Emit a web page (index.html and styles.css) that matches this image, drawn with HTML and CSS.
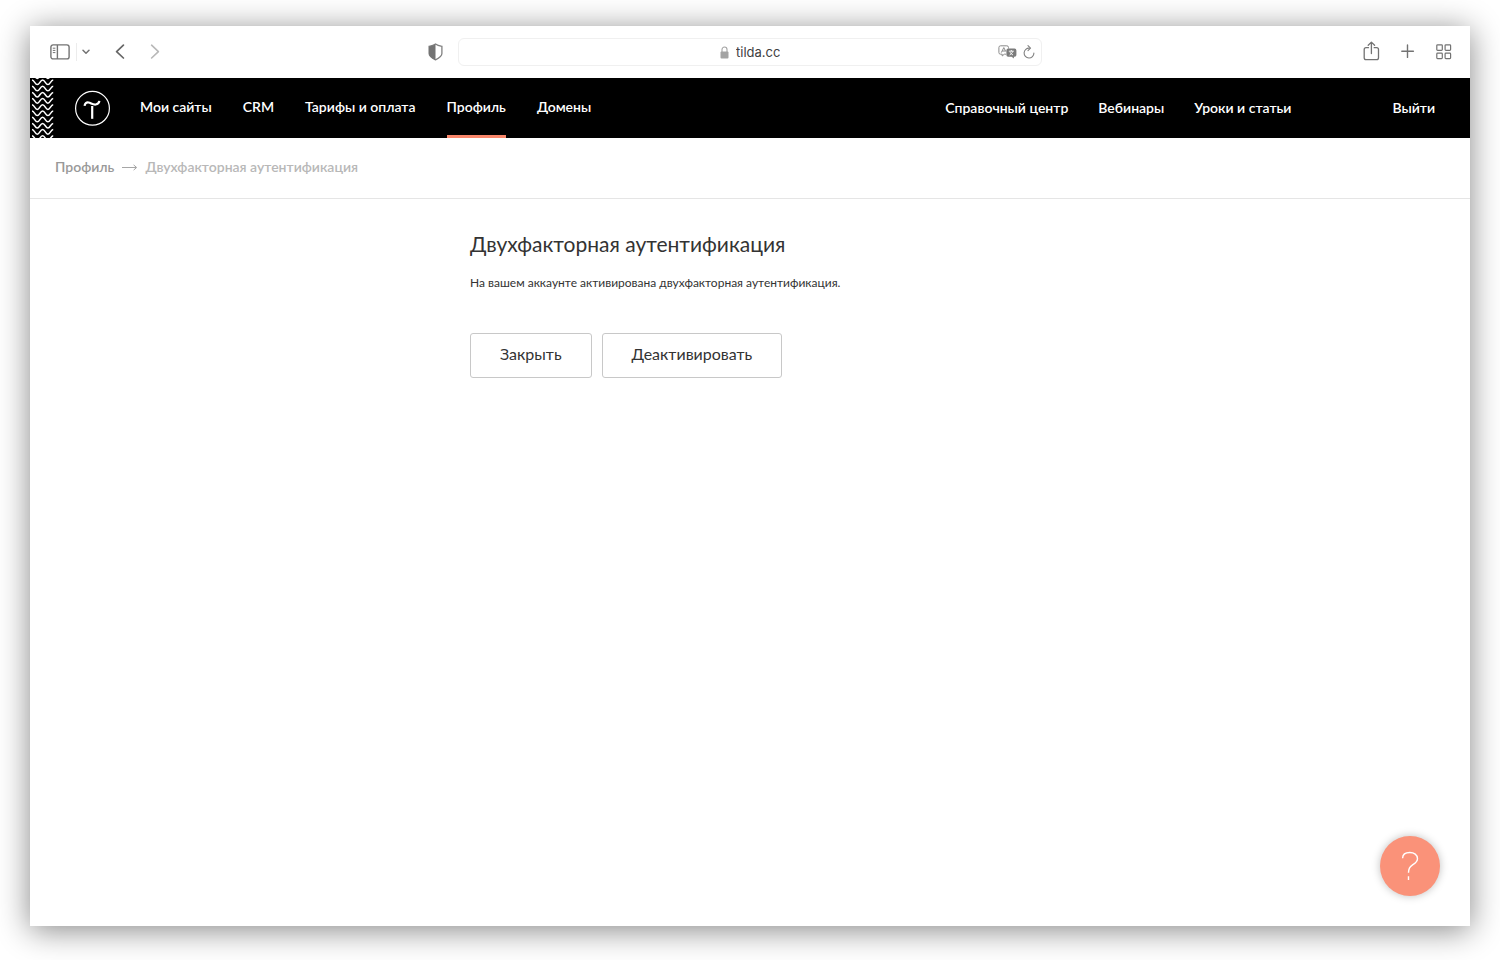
FILE: index.html
```html
<!DOCTYPE html>
<html lang="ru">
<head>
<meta charset="utf-8">
<meta name="viewport" content="width=device-width, initial-scale=1">
<title>Двухфакторная аутентификация</title>
<link rel="stylesheet" href="styles.css">
</head>
<body>
<div class="window">
  <div class="toolbar">
    <div class="toolbar-side toolbar-start">
      <button class="icon-btn" aria-label="Боковая панель"><svg width="20" height="16" viewBox="0 0 20 16" fill="none" stroke="#737373" stroke-width="1.4"><rect x=".9" y=".9" width="18.2" height="14" rx="2.2"/><path d="M7.4 1v14"/><path d="M2.8 4.2h2.6M2.8 6.4h2.6M2.8 8.6h2.6" stroke-width="1"/></svg></button>
      <button class="icon-btn chevron" aria-label="Группы вкладок"><svg width="8" height="6" viewBox="0 0 8 6" fill="none" stroke="#737373" stroke-width="1.5" stroke-linecap="round" stroke-linejoin="round"><path d="M1 1.2l3 3 3-3"/></svg></button>
      <button class="icon-btn back" aria-label="Назад"><svg width="10" height="16" viewBox="0 0 10 16" fill="none" stroke="#666" stroke-width="1.7" stroke-linecap="round" stroke-linejoin="round"><path d="M8.4 1.2L1.6 7.6l6.8 6.4"/></svg></button>
      <button class="icon-btn forward" aria-label="Вперёд"><svg width="10" height="16" viewBox="0 0 10 16" fill="none" stroke="#b8b8b8" stroke-width="1.6" stroke-linecap="round" stroke-linejoin="round"><path d="M1.6 1.2l6.8 6.4L1.6 14"/></svg></button>
      <button class="icon-btn shield" aria-label="Отчёт о конфиденциальности"><svg width="15" height="18" viewBox="0 0 15 18"><path d="M7.5 1.1C5.8 2.4 3.6 3 1.1 3.4v7.2c0 3 3.2 4.8 6.4 6.3 3.2-1.5 6.4-3.3 6.4-6.3V3.4C11.4 3 9.2 2.4 7.5 1.1z" fill="none" stroke="#808080" stroke-width="1.3"/><path d="M7.5 1v16C4.3 15.5 1 13.6 1 10.6V3.4C3.6 3 5.8 2.4 7.5 1z" fill="#737373"/></svg></button>
    </div>
    <div class="address">
      <label class="address-center" for="url">
        <svg width="9" height="13" viewBox="0 0 9 13"><rect x=".5" y="5.5" width="8" height="7" rx="1" fill="#a3a3a3"/><path d="M2 6V3.6a2.5 2.6 0 0 1 5 0V6" fill="none" stroke="#a3a3a3" stroke-width="1.1"/></svg>
        <input class="url" id="url" type="text" value="tilda.cc" size="6" aria-label="Адрес">
      </label>
      <div class="address-tools">
        <button class="icon-btn" aria-label="Перевести"><svg width="19" height="15" viewBox="0 0 19 15"><path d="M8 9.2H6.3L4.2 11V9.2H2.6A1.7 1.7 0 0 1 .9 7.5v-5A1.7 1.7 0 0 1 2.6.8h6.200a1.700 1.700 0 0 1 1.700 1.700v1" fill="none" stroke="#8a8a8a"/><path d="M3.300 7.600l2.500-5 2 4M4.200 6h3" fill="none" stroke="#8a8a8a"/><path d="M10.200 3.600h6.400a1.800 1.800 0 0 1 1.800 1.800v4.500a1.800 1.800 0 0 1-1.800 1.800h-.7v1.900l-2.300-1.900h-3.400a1.800 1.800 0 0 1-1.800-1.800V5.400a1.800 1.800 0 0 1 1.800-1.800z" fill="#7b7b7b"/><path d="M10.800 6.200h5M13.300 5v1.200M11.600 10c1.800-1 2.700-2.200 3.100-3.600M12 7.200c.7 1.300 1.700 2.200 3 2.800" fill="none" stroke="#fff" stroke-width=".9"/></svg></button>
        <button class="icon-btn" aria-label="Обновить"><svg width="12" height="15" viewBox="0 0 12 15" fill="none" stroke="#808080" stroke-width="1.100" stroke-linecap="round" stroke-linejoin="round"><path d="M6.500 3.200A4.900 4.900 0 1 0 10.900 8"/><path d="M5 .7l2.500 2.500L5 5.600"/></svg></button>
      </div>
    </div>
    <div class="toolbar-side toolbar-end">
      <button class="icon-btn" aria-label="Поделиться"><svg width="17" height="22" viewBox="0 0 17 22" fill="none" stroke="#737373" stroke-width="1.300" stroke-linecap="round" stroke-linejoin="round"><path d="M5.500 6.700H3.100a1.900 1.900 0 0 0-1.900 1.900v8.200a1.900 1.900 0 0 0 1.900 1.900h10.500a1.900 1.900 0 0 0 1.900-1.900V8.600a1.900 1.900 0 0 0-1.900-1.900h-2.400M8.400 12.500V1.200M5.200 4.200l3.200-3.100 3.200 3.100"/></svg></button>
      <button class="icon-btn" aria-label="Новая вкладка"><svg width="14" height="16" viewBox="0 0 14 16" stroke="#737373" stroke-width="1.400" stroke-linecap="round"><path d="M6.500 1v12.400M.8 7.200h11.600"/></svg></button>
      <button class="icon-btn" aria-label="Обзор вкладок"><svg width="16" height="16" viewBox="0 0 16 16" fill="none" stroke="#737373" stroke-width="1.200"><rect x=".8" y=".8" width="5.500" height="5.500" rx=".8"/><rect x="9.100" y=".8" width="5.500" height="5.500" rx=".8"/><rect x=".8" y="9.100" width="5.500" height="5.500" rx=".8"/><rect x="9.100" y="9.100" width="5.500" height="5.500" rx=".8"/></svg></button>
    </div>
  </div>

  <header class="header">
    <svg class="waves" width="24" height="60" viewBox="0 0 24 60" fill="none" stroke="#fff" stroke-width="1.500" aria-hidden="true">
      <defs><path id="wave" d="M2 0c2.400.2 3 4.600 5.300 4.600S10.200 0 12.600 0s3 4.600 5.300 4.600S20.800.2 23.200 0"/></defs>
      <use href="#wave" y="-4.200"/><use href="#wave" y="2"/><use href="#wave" y="8.200"/><use href="#wave" y="14.400"/><use href="#wave" y="20.600"/><use href="#wave" y="26.800"/><use href="#wave" y="33"/><use href="#wave" y="39.200"/><use href="#wave" y="45.400"/><use href="#wave" y="51.600"/><use href="#wave" y="57.800"/>
    </svg>
    <a class="logo" href="#" aria-label="Tilda"><svg width="36" height="36" viewBox="0 0 36 36" fill="none" stroke="#fff"><circle cx="17.500" cy="18.300" r="16.900" stroke-width="1.200"/><path d="M9.600 15.800c.2-2.400 1.900-3.700 3.900-3.300 2.500.5 4.300 2.400 7.200 2 2.100-.3 3.400-1.500 3.700-3.600" stroke-width="2.200"/><path d="M17.200 16v12.800" stroke-width="2.200"/></svg></a>
    <nav class="nav">
      <a class="nav-link" href="#">Мои сайты</a>
      <a class="nav-link" href="#">CRM</a>
      <a class="nav-link" href="#">Тарифы и оплата</a>
      <a class="nav-link active" href="#">Профиль</a>
      <a class="nav-link" href="#">Домены</a>
    </nav>
    <nav class="nav nav-help">
      <a class="nav-link" href="#">Справочный центр</a>
      <a class="nav-link" href="#">Вебинары</a>
      <a class="nav-link" href="#">Уроки и статьи</a>
      <a class="nav-link logout" href="#">Выйти</a>
    </nav>
  </header>

  <nav class="crumbs">
    <a class="crumb" href="#">Профиль</a>
    <svg width="17" height="8" viewBox="0 0 17 8" fill="none" stroke="#a6a6a6" aria-hidden="true"><path d="M1 4.500h14"/><path d="M12.600 1.900l3.100 2.600-3.100 2.600"/></svg>
    <span class="crumb-current">Двухфакторная аутентификация</span>
  </nav>

  <main class="content">
    <h1 class="title">Двухфакторная аутентификация</h1>
    <p class="text">На вашем аккаунте активирована двухфакторная аутентификация.</p>
    <div class="actions">
      <button class="btn">Закрыть</button>
      <button class="btn">Деактивировать</button>
    </div>
  </main>

  <button class="help" aria-label="Помощь"><svg width="18" height="30" viewBox="0 0 18 30" fill="none" stroke="#fff" stroke-width="1.400"><path d="M1.600 7.200C1.700 3.400 4.600 1.500 8.800 1.500s7.700 2.200 7.700 6.200c0 3.300-2.600 4.700-5.200 6.400-2.700 1.700-3.800 3.300-3.800 7.600M7.500 25.200v3.800"/></svg></button>
</div>
</body>
</html>
```
FILE: styles.css
```css
* {
  box-sizing: border-box;
}

body {
  display: flex;
  min-height: 100vh;
  margin: 0;
  padding: 26px 30px 34px;
  background: #fff;
  color: #333;
  font-family: Lato, "Open Sans", sans-serif;
}

a {
  color: inherit;
  text-decoration: none;
}

.window {
  position: relative;
  display: flex;
  flex: 1;
  flex-direction: column;
  min-width: 0;
  background: #fff;
  box-shadow: 0 4px 30px rgba(0, 0, 0, 0.48);
}

.toolbar {
  display: grid;
  grid-template-columns: 1fr minmax(0, 584px) 1fr;
  align-items: center;
  height: 52px;
  padding: 0 18px;
}

.toolbar-side {
  display: flex;
  align-items: center;
}

.toolbar-start {
  padding-left: 2px;
}

.toolbar-end {
  gap: 21px;
  justify-content: flex-end;
}

.icon-btn {
  display: flex;
  padding: 0;
  border: 0;
  background: none;
}

.chevron {
  margin-left: 6px;
  padding: 6px 0 6px 5px;
  border-left: 1px solid #ececec;
}

.back {
  margin-left: 25px;
}

.forward {
  margin-left: 25px;
}

.shield {
  margin: 0 15px 0 auto;
}

.address {
  display: grid;
  grid-template-columns: 1fr auto 1fr;
  align-items: center;
  height: 28px;
  padding: 0 6px;
  border: 1px solid #f0f0f0;
  border-radius: 6px;
}

.address-center {
  display: flex;
  grid-column: 2;
  gap: 7px;
  align-items: center;
}

.url {
  width: 44px;
  padding: 0;
  border: 0;
  background: none;
  color: #404040;
  font: 13px/18px Inter, sans-serif;
}

.address-tools {
  display: flex;
  gap: 6px;
  align-items: center;
  justify-content: flex-end;
}

.header {
  display: flex;
  align-items: center;
  height: 60px;
  padding-right: 35px;
  background: #000;
  color: #fff;
}

.logo {
  display: flex;
  margin: 0 29px 0 21px;
}

.nav {
  display: flex;
  gap: 31px;
  align-self: stretch;
}

.nav-link {
  padding-bottom: 2px;
  border-bottom: 3px solid transparent;
  font-size: 14px;
  font-weight: 600;
  line-height: 58px;
  white-space: nowrap;
}

.active {
  border-color: #fa876b;
}

.nav-help {
  gap: 30px;
  margin-left: auto;
}

.nav-help .nav-link {
  line-height: 60px;
}

.logout {
  margin-left: 71px;
}

.crumbs {
  display: flex;
  gap: 7px;
  align-items: center;
  height: 61px;
  padding: 0 25px 3px;
  border-bottom: 1px solid #e5e5e5;
  color: #b8b8b8;
  font-size: 14px;
  font-weight: 600;
}

.crumb {
  color: #999;
}

.content {
  width: 100%;
  max-width: 560px;
  margin: 0 auto;
  padding: 30px 0;
}

.title {
  margin: 0;
  font-size: 21px;
  font-weight: 400;
  line-height: 30px;
}

.text {
  margin: 14px 0 0;
  font-size: 12px;
  line-height: 20px;
}

.actions {
  display: flex;
  gap: 10px;
  margin-top: 40px;
}

.btn {
  height: 45px;
  padding: 0 29px 3px;
  border: 1px solid #c8c8c8;
  border-radius: 3px;
  background: #fff;
  color: #333;
  font: 16px/24px Lato, "Open Sans", sans-serif;
}

.help {
  position: absolute;
  right: 30px;
  bottom: 30px;
  display: flex;
  align-items: center;
  justify-content: center;
  width: 60px;
  height: 60px;
  padding: 0;
  border: 0;
  border-radius: 50%;
  background: #fa9279;
  box-shadow: 0 0 8px rgba(0, 0, 0, 0.25);
}
```
